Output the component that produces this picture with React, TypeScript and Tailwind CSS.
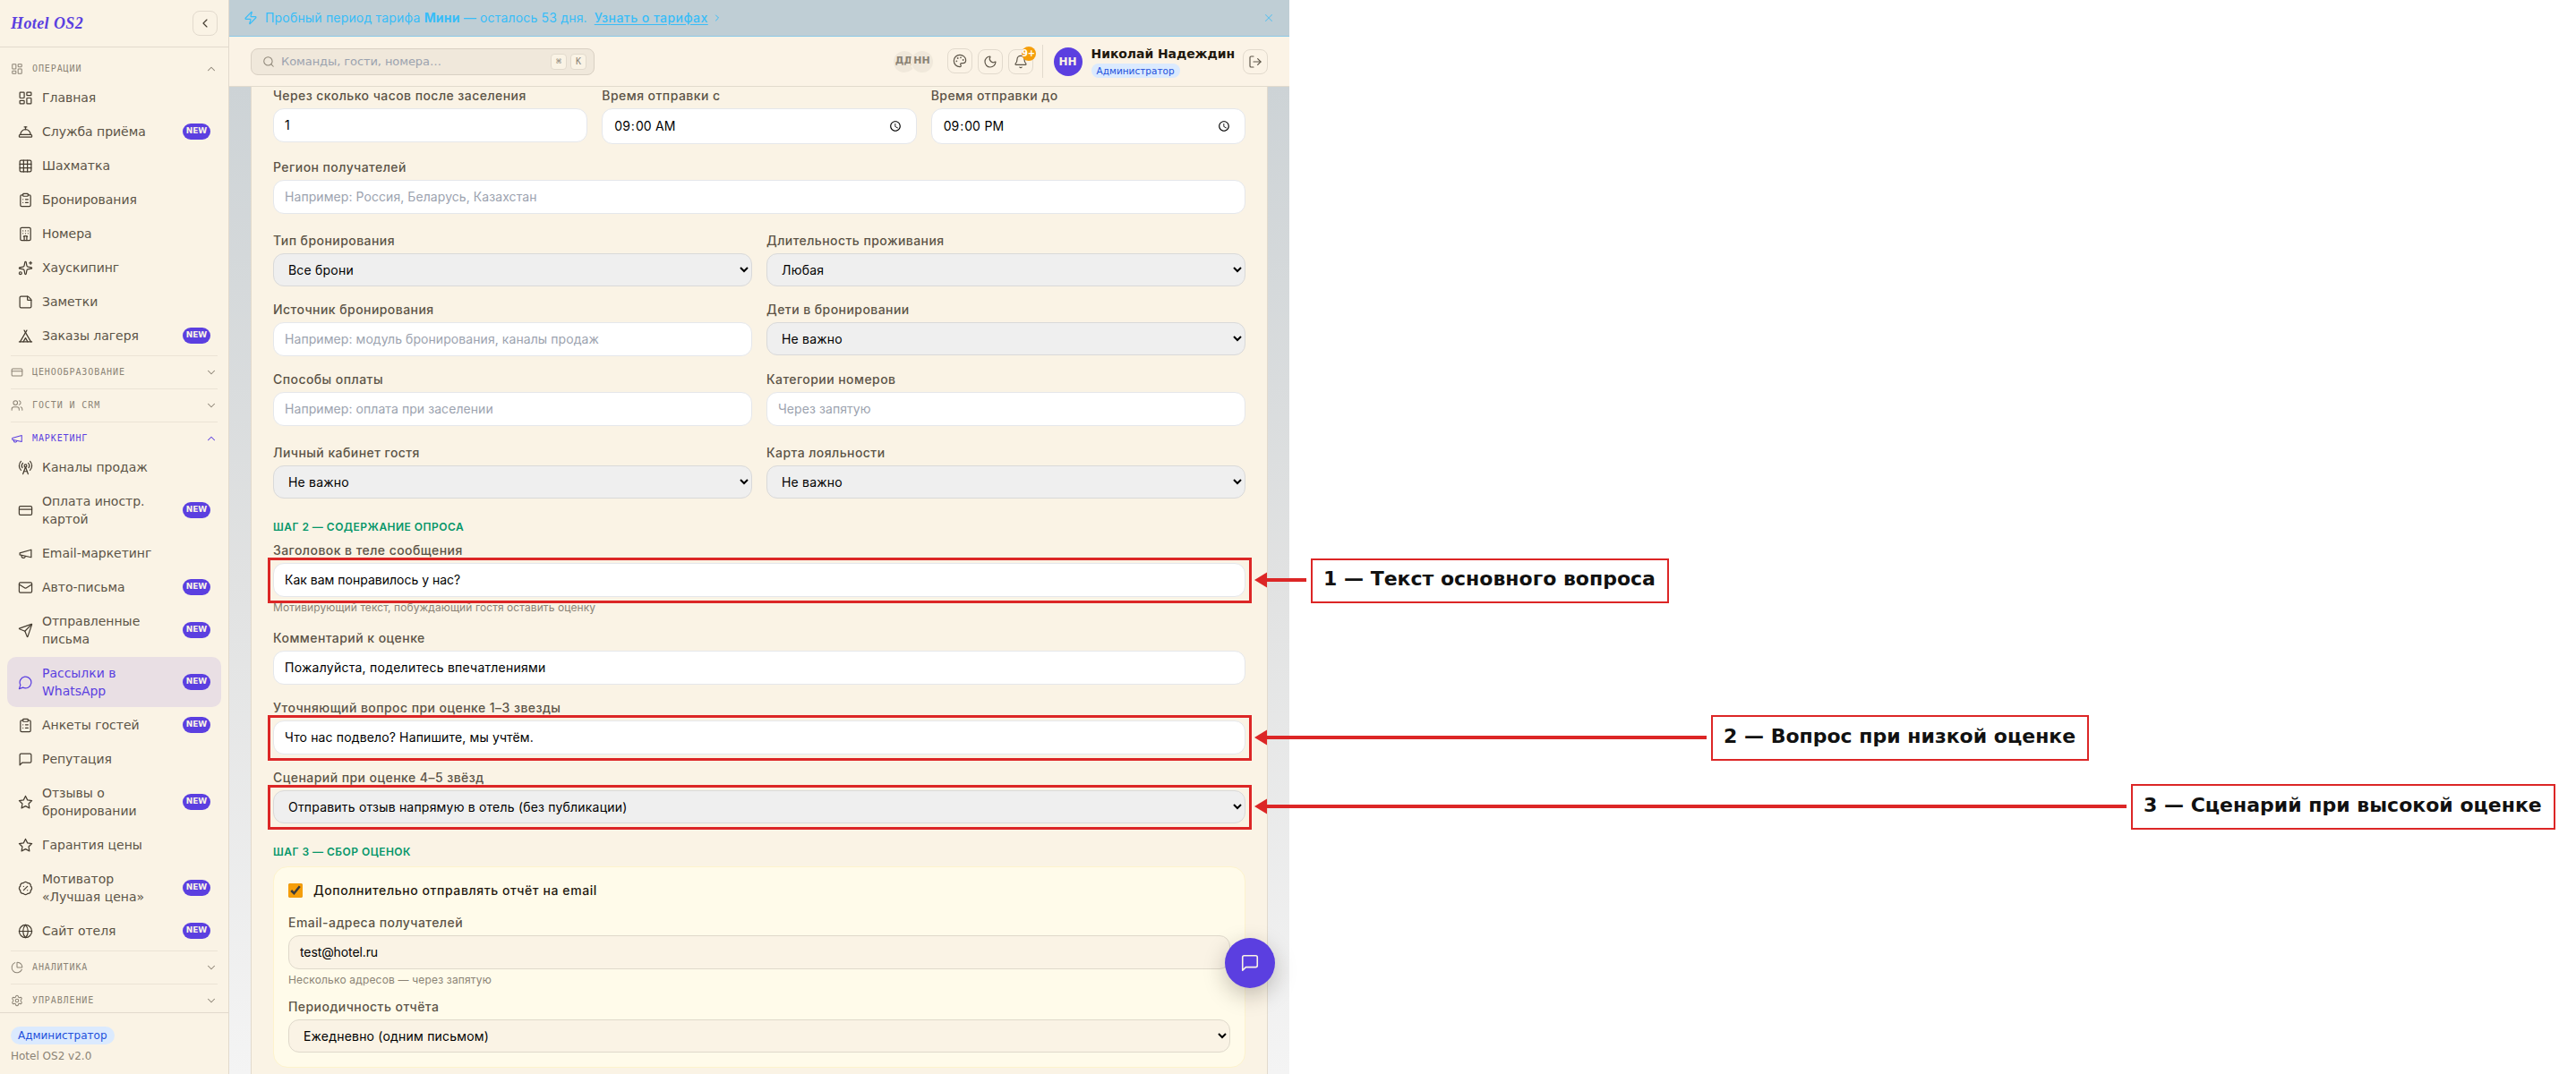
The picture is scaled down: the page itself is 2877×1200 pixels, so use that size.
import React from 'react';
import {
  BadgePercent,
  Bell,
  ChartPie,
  ChevronDown,
  ChevronLeft,
  ChevronRight,
  ChevronUp,
  ClipboardList,
  ConciergeBell,
  CreditCard,
  Globe,
  Grid3x3,
  Hotel,
  LayoutDashboard,
  LogOut,
  Mail,
  Moon,
  Palette,
  RadioTower,
  Search,
  Send,
  Settings,
  Sparkles,
  StickyNote,
  Tent,
  Users,
  X,
  Zap,
} from 'lucide-react';

type IconProps = { size?: number; strokeWidth?: number; className?: string };

const svgProps = (p: IconProps) => ({
  width: p.size,
  height: p.size,
  viewBox: '0 0 24 24',
  fill: 'none',
  stroke: 'currentColor',
  strokeWidth: p.strokeWidth,
  strokeLinecap: 'round' as const,
  strokeLinejoin: 'round' as const,
  className: p.className,
});

const Megaphone = (p: IconProps) => (
  <svg {...svgProps(p)}>
    <path d="m3 11 18-5v12L3 14v-3z" />
    <path d="M11.6 16.8a3 3 0 1 1-5.8-1.6" />
  </svg>
);

const ChatRound = (p: IconProps) => (
  <svg {...svgProps(p)}>
    <path d="M7.9 20A9 9 0 1 0 4 16.1L2 22Z" />
  </svg>
);

const ChatSquare = (p: IconProps) => (
  <svg {...svgProps(p)}>
    <path d="M21 15a2 2 0 0 1-2 2H7l-4 4V5a2 2 0 0 1 2-2h14a2 2 0 0 1 2 2z" />
  </svg>
);

const Star = (p: IconProps) => (
  <svg {...svgProps(p)}>
    <polygon points="12 2 15.09 8.26 22 9.27 17 14.14 18.18 21.02 12 17.77 5.82 21.02 7 14.14 2 9.27 8.91 8.26 12 2" />
  </svg>
);

type Item = { label: string; icon: React.ElementType; isNew?: boolean; active?: boolean };
type Section = { title: string; icon: React.ElementType; active?: boolean; items?: Item[] };

const sections: Section[] = [
  {
    title: 'Операции',
    icon: LayoutDashboard,
    items: [
      { label: 'Главная', icon: LayoutDashboard },
      { label: 'Служба приёма', icon: ConciergeBell, isNew: true },
      { label: 'Шахматка', icon: Grid3x3 },
      { label: 'Бронирования', icon: ClipboardList },
      { label: 'Номера', icon: Hotel },
      { label: 'Хаускипинг', icon: Sparkles },
      { label: 'Заметки', icon: StickyNote },
      { label: 'Заказы лагеря', icon: Tent, isNew: true },
    ],
  },
  { title: 'Ценообразование', icon: CreditCard },
  { title: 'Гости и CRM', icon: Users },
  {
    title: 'Маркетинг',
    icon: Megaphone,
    active: true,
    items: [
      { label: 'Каналы продаж', icon: RadioTower },
      { label: 'Оплата иностр. картой', icon: CreditCard, isNew: true },
      { label: 'Email-маркетинг', icon: Megaphone },
      { label: 'Авто-письма', icon: Mail, isNew: true },
      { label: 'Отправленные письма', icon: Send, isNew: true },
      { label: 'Рассылки в WhatsApp', icon: ChatRound, isNew: true, active: true },
      { label: 'Анкеты гостей', icon: ClipboardList, isNew: true },
      { label: 'Репутация', icon: ChatSquare },
      { label: 'Отзывы о бронировании', icon: Star, isNew: true },
      { label: 'Гарантия цены', icon: Star },
      { label: 'Мотиватор «Лучшая цена»', icon: BadgePercent, isNew: true },
      { label: 'Сайт отеля', icon: Globe, isNew: true },
    ],
  },
  { title: 'Аналитика', icon: ChartPie },
  { title: 'Управление', icon: Settings },
];

function NavItem({ label, icon: Icon, isNew, active }: Item) {
  return (
    <div
      className={`flex items-center rounded-[10px] px-3 py-2 ${
        active ? 'bg-[#e9dfe4] text-[#5b3fe0]' : 'text-[#5c5447]'
      }`}
    >
      <Icon size={17} strokeWidth={1.75} className={`shrink-0 ${active ? 'text-[#5b3fe0]' : 'text-[#453d31]'}`} />
      <span className="ml-2.5 flex-1 text-sm leading-5 tracking-[-0.03px]">{label}</span>
      {isNew && (
        <span className="ml-2 h-[18px] w-[31px] shrink-0 rounded-[9px] bg-[#5b3fe0] text-center text-[9px] leading-4 font-bold text-[#faf3e5]">
          NEW
        </span>
      )}
    </div>
  );
}

function Sidebar() {
  return (
    <aside className="flex h-full w-64 shrink-0 flex-col border-r border-[#e2dacd] bg-[#faf3e5] font-['DejaVu_Sans',sans-serif]">
      <div className="flex h-[53px] shrink-0 items-center justify-between border-b border-[#e2dacd] px-3">
        <span className="font-['Liberation_Serif',serif] text-lg font-bold tracking-[0.4px] text-[#5b3fe0] italic">
          Hotel OS2
        </span>
        <button className="flex h-7 w-7 items-center justify-center rounded-lg border border-[#e2dacd] text-[#453d31]">
          <ChevronLeft size={16} strokeWidth={1.75} />
        </button>
      </div>
      <nav className="min-h-0 flex-1 overflow-hidden pt-[5px]">
        {sections.map((s, i) => {
          const Chevron = s.items ? ChevronUp : ChevronDown;
          return (
            <div key={s.title} className="px-2 pb-1">
              <div className={`mx-1 border-t pt-[3px] ${i === 0 ? 'border-transparent' : 'border-[#ebe3d5]'}`}>
                <div className={`flex h-[29px] items-center ${s.active ? 'text-[#5b3fe0]' : 'text-[#8b8375]'}`}>
                  <s.icon size={14} strokeWidth={1.75} />
                  <span className="ml-[10px] flex-1 font-['DejaVu_Sans_Mono',monospace] text-[10px] tracking-[0.9px] uppercase">
                    {s.title}
                  </span>
                  <Chevron size={14} strokeWidth={1.75} />
                </div>
              </div>
              {s.items && (
                <div className="flex flex-col gap-0.5">
                  {s.items.map((item) => (
                    <NavItem key={item.label} {...item} />
                  ))}
                </div>
              )}
            </div>
          );
        })}
      </nav>
      <div className="flex h-[69px] shrink-0 flex-col items-start border-t border-[#e2dacd] px-3 pt-[15px]">
        <span className="h-5 rounded-full bg-[#dbeafe] px-2 text-xs leading-5 text-[#2251dc]">Администратор</span>
        <span className="mt-[5px] text-xs leading-4 text-[#8b8375]">Hotel OS2 v2.0</span>
      </div>
    </aside>
  );
}

function TrialBanner() {
  return (
    <div className="flex h-[41px] shrink-0 items-center border-b border-[#8cc8e6] bg-[#bfced5] px-4 text-sm text-[#38bdf8]">
      <Zap size={16} strokeWidth={1.75} />
      <span className="ml-2 tracking-[0.18px]">
        Пробный период тарифа <b className="font-bold">Мини</b> — осталось 53 дня.
      </span>
      <a className="ml-2 font-medium tracking-[0.45px] underline underline-offset-2">Узнать о тарифах</a>
      <ChevronRight size={12} className="ml-1" />
      <X size={14} strokeWidth={1.75} className="ml-auto opacity-70" />
    </div>
  );
}

function TopBar() {
  const iconButton =
    'relative flex h-7 w-7 shrink-0 items-center justify-center rounded-lg border border-[#e2dacd] text-[#5c5447]';
  return (
    <header className="flex h-14 shrink-0 items-center border-b border-[#e2dacd] bg-[#fbf3e6] px-6 font-['DejaVu_Sans',sans-serif]">
      <div className="flex h-[30px] w-96 items-center rounded-lg border border-[#d9d0c3] bg-[#f0e8db] px-3 text-[#8b8375]">
        <Search size={14} strokeWidth={1.75} />
        <span className="ml-[7px] flex-1 text-[13px] tracking-[-0.08px] text-[#9ca3af]">Команды, гости, номера…</span>
        <kbd className="flex h-[18px] w-[18px] items-center justify-center rounded border border-[#e2dacd] bg-[#faf3e5] font-['DejaVu_Sans_Mono',monospace] text-[10px]">
          ⌘
        </kbd>
        <kbd className="-mr-1 ml-1 flex h-[18px] w-[18px] items-center justify-center rounded border border-[#e2dacd] bg-[#faf3e5] font-['DejaVu_Sans_Mono',monospace] text-[10px]">
          K
        </kbd>
      </div>
      <div className="ml-auto flex text-[11px] font-bold text-[#8b8375]">
        <span className="flex h-6 w-6 items-center justify-center rounded-full bg-[#f0e8db]">ДД</span>
        <span className="-ml-1 flex h-6 w-6 items-center justify-center rounded-full bg-[#f0e8db] ring-1 ring-[#faf3e5]">
          НН
        </span>
      </div>
      <button className={`${iconButton} -mt-0.5 ml-4`}>
        <Palette size={16} strokeWidth={1.75} />
      </button>
      <button className={`${iconButton} ml-1.5`}>
        <Moon size={16} strokeWidth={1.75} />
      </button>
      <button className={`${iconButton} ml-1.5`}>
        <Bell size={16} strokeWidth={1.75} />
        <span className="absolute -top-1 -right-1 flex h-4 w-4 justify-center rounded-full bg-[#f59e0b] text-[10px] leading-4 font-bold text-white">
          9+
        </span>
      </button>
      <div className="ml-2.5 h-[37px] w-px bg-[#e2dacd]" />
      <div className="ml-3 flex h-8 w-8 shrink-0 items-center justify-center rounded-full bg-[#5b3fe0] text-xs font-bold text-[#faf3e5]">
        НН
      </div>
      <div className="ml-2.5 flex flex-col items-start">
        <span className="text-sm leading-[18px] font-bold tracking-[-0.08px] whitespace-nowrap text-[#1f180e]">
          Николай Надеждин
        </span>
        <span className="mt-0.5 h-4 rounded-full bg-[#dbeafe] px-1.5 text-[10.5px] leading-4 text-[#2251dc]">
          Администратор
        </span>
      </div>
      <button className={`${iconButton} ml-[9px]`}>
        <LogOut size={16} strokeWidth={1.75} />
      </button>
    </header>
  );
}

type FieldProps = { label: string; hint?: string; hintTracking?: string; children: React.ReactNode };

function Field({ label, hint, hintTracking = 'tracking-[0.08px]', children }: FieldProps) {
  return (
    <div className="flex min-w-0 flex-col">
      <label className="mb-1 text-sm leading-5 font-medium tracking-[0.44px] text-[#5c5447]">{label}</label>
      {children}
      {hint && <p className={`mt-1 text-xs leading-4 text-[#8b8375] ${hintTracking}`}>{hint}</p>}
    </div>
  );
}

type InputProps = { value?: string; placeholder?: string; cream?: boolean; tracking?: string };

function TextInput({ value, placeholder, cream, tracking = 'tracking-[0.07px]' }: InputProps) {
  return (
    <input
      readOnly
      value={value ?? ''}
      placeholder={placeholder}
      className={`h-[38px] w-full rounded-xl border px-3 pb-0.5 text-sm text-black placeholder:text-[#9ca3af] ${tracking} ${
        cream ? 'border-[#dfd9cb] bg-[#faf3e5]' : 'border-gray-200 bg-white'
      }`}
    />
  );
}

function TimeInput({ value }: { value: string }) {
  return (
    <input
      type="time"
      defaultValue={value}
      className="h-10 w-full rounded-xl border border-gray-200 bg-white px-3 text-sm text-black"
    />
  );
}

function Select({ value, cream }: { value: string; cream?: boolean }) {
  return (
    <select
      className={`h-[37px] w-full rounded-xl border px-3 text-sm tracking-[0.2px] text-black ${
        cream ? 'border-[#dfd9cb] bg-[#faf3e5]' : 'border-[#d9d9d9] bg-[#efefef]'
      }`}
    >
      <option>{value}</option>
    </select>
  );
}

function StepTitle({ children }: { children: React.ReactNode }) {
  return <h3 className="mt-6 text-xs leading-4 font-semibold tracking-[0.48px] text-[#059669] uppercase">{children}</h3>;
}

function SurveyForm() {
  return (
    <div className="h-full border-x border-[#e2dacd] bg-[#faf3e5] px-6">
      <div className="grid grid-cols-3 items-start gap-4">
        <Field label="Через сколько часов после заселения">
          <TextInput value="1" />
        </Field>
        <Field label="Время отправки с">
          <TimeInput value="09:00" />
        </Field>
        <Field label="Время отправки до">
          <TimeInput value="21:00" />
        </Field>
      </div>
      <div className="mt-4">
        <Field label="Регион получателей">
          <TextInput placeholder="Например: Россия, Беларусь, Казахстан" />
        </Field>
      </div>
      <div className="mt-5 grid grid-cols-2 items-start gap-4">
        <Field label="Тип бронирования">
          <Select value="Все брони" />
        </Field>
        <Field label="Длительность проживания">
          <Select value="Любая" />
        </Field>
        <Field label="Источник бронирования">
          <TextInput placeholder="Например: модуль бронирования, каналы продаж" />
        </Field>
        <Field label="Дети в бронировании">
          <Select value="Не важно" />
        </Field>
        <Field label="Способы оплаты">
          <TextInput placeholder="Например: оплата при заселении" />
        </Field>
        <Field label="Категории номеров">
          <TextInput placeholder="Через запятую" />
        </Field>
      </div>
      <div className="mt-5 grid grid-cols-2 gap-4">
        <Field label="Личный кабинет гостя">
          <Select value="Не важно" />
        </Field>
        <Field label="Карта лояльности">
          <Select value="Не важно" />
        </Field>
      </div>

      <StepTitle>Шаг 2 — Содержание опроса</StepTitle>
      <div className="mt-2 flex flex-col gap-4">
        <Field label="Заголовок в теле сообщения" hint="Мотивирующий текст, побуждающий гостя оставить оценку">
          <TextInput value="Как вам понравилось у нас?" tracking="tracking-normal" />
        </Field>
        <Field label="Комментарий к оценке">
          <TextInput value="Пожалуйста, поделитесь впечатлениями" tracking="tracking-[0.25px]" />
        </Field>
        <Field label="Уточняющий вопрос при оценке 1–3 звезды">
          <TextInput value="Что нас подвело? Напишите, мы учтём." tracking="tracking-[0.14px]" />
        </Field>
        <Field label="Сценарий при оценке 4–5 звёзд">
          <Select value="Отправить отзыв напрямую в отель (без публикации)" />
        </Field>
      </div>

      <StepTitle>Шаг 3 — Сбор оценок</StepTitle>
      <div className="mt-2 rounded-2xl border border-[#fdf3cd] bg-[#fffbea] p-4">
        <label className="flex h-5 items-center gap-3 text-sm font-medium tracking-[0.58px] text-[#1f180e]">
          <input type="checkbox" defaultChecked className="h-4 w-4 accent-[#f59e0b]" />
          Дополнительно отправлять отчёт на email
        </label>
        <div className="mt-4 flex flex-col gap-3">
          <Field
            label="Email-адреса получателей"
            hint="Несколько адресов — через запятую"
            hintTracking="tracking-[0.17px]"
          >
            <TextInput value="test@hotel.ru" tracking="tracking-[-0.1px]" cream />
          </Field>
          <Field label="Периодичность отчёта">
            <Select value="Ежедневно (одним письмом)" cream />
          </Field>
        </div>
      </div>
    </div>
  );
}

type CalloutProps = { text: string; frame: string; arrow: string; label: string };

// Frame around a field, an arrow that points at it and the caption on the right
const callouts: CalloutProps[] = [
  {
    text: '1 — Текст основного вопроса',
    frame: 'top-[623px] h-[51px]',
    arrow: 'top-[639px] w-[58px]',
    label: 'top-[624px] left-[1464px] h-[50px] w-[400px] leading-[41px]',
  },
  {
    text: '2 — Вопрос при низкой оценке',
    frame: 'top-[799px] h-[51px]',
    arrow: 'top-[815px] w-[505px]',
    label: 'top-[799px] left-[1911px] h-[51px] w-[422px] leading-[43px]',
  },
  {
    text: '3 — Сценарий при высокой оценке',
    frame: 'top-[877px] h-[50px]',
    arrow: 'top-[892px] w-[974px]',
    label: 'top-[876px] left-[2380px] h-[51px] w-[474px] leading-[43px]',
  },
];

function Callout({ text, frame, arrow, label }: CalloutProps) {
  return (
    <>
      <div className={`absolute left-[299px] w-[1099px] border-3 border-[#dc2626] ${frame}`} />
      <div className={`absolute left-[1401px] flex h-[18px] items-center ${arrow}`}>
        <svg width="14" height="18" viewBox="0 0 14 18" className="shrink-0">
          <path d="M0 9 14 0.5v17z" fill="#dc2626" />
        </svg>
        <div className="h-1 flex-1 bg-[#dc2626]" />
      </div>
      <div
        className={`absolute border-2 border-[#dc2626] bg-white pl-3 font-['DejaVu_Sans',sans-serif] text-[22px] font-bold whitespace-nowrap text-[#111111] ${label}`}
      >
        {text}
      </div>
    </>
  );
}

export default function App() {
  return (
    <div className="relative flex h-[1200px] w-[2877px] overflow-hidden bg-white">
      <div className="relative flex h-full w-[1440px] shrink-0 font-['Inter',sans-serif]">
        <Sidebar />
        <div className="flex min-w-0 flex-1 flex-col">
          <TrialBanner />
          <TopBar />
          <main className="min-h-0 flex-1 overflow-hidden bg-linear-to-b from-[#cdd3d6] via-[#e1e2e2] to-[#f4f4f4] px-6">
            <SurveyForm />
          </main>
        </div>
        <button className="absolute right-4 bottom-24 flex h-14 w-14 items-center justify-center rounded-full bg-[#5b3fe0] text-[#faf3e5] shadow-[0_8px_24px_rgba(31,24,14,0.25)]">
          <ChatSquare size={22} strokeWidth={1.75} />
        </button>
      </div>
      {callouts.map((c) => (
        <Callout key={c.text} {...c} />
      ))}
    </div>
  );
}
